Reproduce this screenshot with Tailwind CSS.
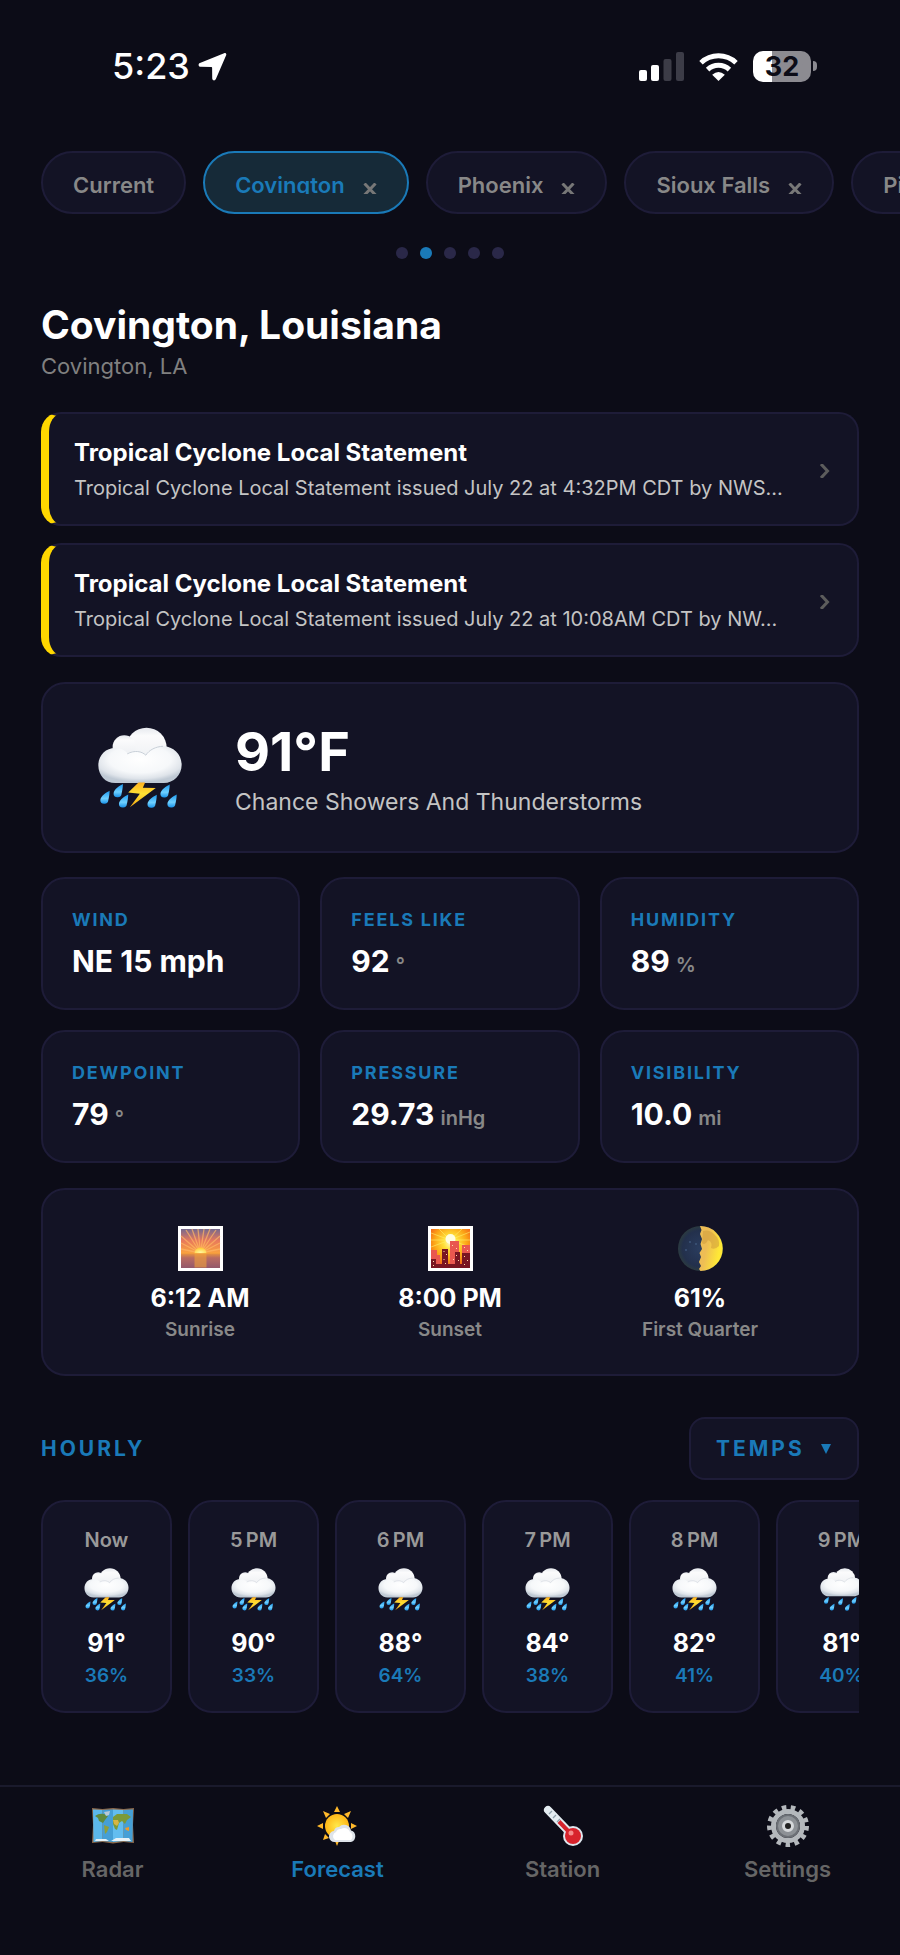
<!DOCTYPE html>
<html lang="en">
<head>
    <meta charset="UTF-8">
    <meta name="viewport" content="width=device-width, initial-scale=1.0">
    <title>Weather - Covington, Louisiana</title>
    <script src="https://cdn.jsdelivr.net/npm/@tailwindcss/browser@4"></script>
</head>
<body class="bg-[#0c0c17] font-['Inter',sans-serif] text-white">
    <!-- Shared weather icons -->
    <svg class="absolute h-0 w-0" aria-hidden="true">
        <defs>
            <linearGradient id="cloud-back" x1="0" y1="0" x2="0" y2="1">
                <stop offset="0" stop-color="#e6e9ee"/>
                <stop offset="0.2" stop-color="#fbfbfc"/>
                <stop offset="1" stop-color="#e9ecf0"/>
            </linearGradient>
            <radialGradient id="cloud-front" cx="0.5" cy="0.35" r="0.62">
                <stop offset="0" stop-color="#ffffff"/>
                <stop offset="0.6" stop-color="#f6f8fa"/>
                <stop offset="0.85" stop-color="#dfe4ea"/>
                <stop offset="1" stop-color="#bfc9d4"/>
            </radialGradient>
            <linearGradient id="bolt-fill" x1="0" y1="0" x2="0" y2="1">
                <stop offset="0" stop-color="#ffb01f"/>
                <stop offset="0.45" stop-color="#ffe234"/>
                <stop offset="1" stop-color="#f5a50f"/>
            </linearGradient>
            <linearGradient id="drop-fill" x1="0" y1="0" x2="0" y2="1">
                <stop offset="0" stop-color="#1e9bf0"/>
                <stop offset="0.6" stop-color="#6fd0ff"/>
                <stop offset="1" stop-color="#1791e8"/>
            </linearGradient>
            <path id="drop" d="M29 0C20 4 1 17 1 28a12 11 0 0 0 24 1C27 21 29 9 29 0Z" fill="url(#drop-fill)"/>
            <g id="cloud">
                <circle cx="200" cy="112" r="61" fill="url(#cloud-back)"/>
                <circle cx="133" cy="109" r="35" fill="url(#cloud-back)"/>
                <path d="M106 218C76 218 55 194 55 164C55 134 77 112 106 112C122 112 132 117 142 127C164 118 186 122 198 134C210 116 230 107 250 107C282 107 306 132 306 163C306 194 282 218 252 218Z" fill="url(#cloud-front)"/>
                <path d="M142 130C164 118 186 122 198 134C208 118 228 108 250 107" fill="none" stroke="#c9d0d8" stroke-width="3"/>
            </g>
        </defs>
        <symbol id="icon-storm" viewBox="54 50 253 245">
            <use href="#cloud"/>
            <use href="#drop" x="60" y="241"/>
            <use href="#drop" x="100" y="221"/>
            <use href="#drop" x="116" y="252"/>
            <use href="#drop" x="202" y="253"/>
            <use href="#drop" x="241" y="222"/>
            <use href="#drop" x="262" y="252"/>
            <path d="M176 216L145 246L180 250L150 291L228 233L189 232L196 216Z" fill="url(#bolt-fill)"/>
        </symbol>
        <symbol id="icon-rain" viewBox="54 40 253 255">
            <g transform="translate(0 -10)"><use href="#cloud"/></g>
            <use href="#drop" x="76" y="212"/>
            <use href="#drop" x="110" y="252"/>
            <use href="#drop" x="160" y="220"/>
            <use href="#drop" x="200" y="254"/>
            <use href="#drop" x="240" y="212"/>
        </symbol>
        <symbol id="icon-close" viewBox="0 0 14 11">
            <path d="M1.500 0.500L12.500 12M12.500 0.500L1.500 12" stroke="currentColor" stroke-width="3" fill="none"/>
        </symbol>
    </svg>

    <div class="flex min-h-screen flex-col">
        <!-- Status bar -->
        <header class="flex h-[151px] items-start justify-between pt-12 pr-[83px] pl-28">
            <div class="flex h-9 items-center gap-2">
                <span class="text-[36px] leading-9 font-medium">5:23</span>
                <svg class="h-[29px] w-[29px]" viewBox="0 0 30 30" fill="#fff"><path d="M27 1.200C28.500 .5 29.800 1.800 29.100 3.400L18.500 28C17.500 30.200 14.700 29.600 14.700 27.200L14.600 16.200Q14.600 15.400 13.800 15.400L2.800 15.300C.4 15.300-.2 12.500 2 11.500Z"/></svg>
            </div>
            <div class="flex h-9 items-center gap-[15px]">
                <svg class="h-[29px] w-[45px]" viewBox="0 0 45 29">
                    <rect x="0" y="18" width="8" height="11" rx="2" fill="#fff"/>
                    <rect x="12" y="13" width="8" height="16" rx="2" fill="#fff"/>
                    <rect x="24.500" y="7" width="8" height="22" rx="2" fill="#3c3c47"/>
                    <rect x="37" y="0" width="8" height="29" rx="2" fill="#3c3c47"/>
                </svg>
                <svg class="h-[29px] w-[39px]" viewBox="0 0 39 29" fill="none" stroke="#fff" stroke-width="5">
                    <path d="M2 10.800A25.500 25.500 0 0 1 37 10.800"/>
                    <path d="M8.600 17.600A16 16 0 0 1 30.400 17.600"/>
                    <path d="M19.500 29L13.200 22.700Q19.500 17.300 25.800 22.700Z" fill="#fff" stroke="none"/>
                </svg>
                <div class="flex items-center gap-0.5">
                    <div class="flex h-[31px] w-[58px] items-center justify-center rounded-[10px] bg-linear-to-r from-white from-33% to-[#8c8b91] to-33% text-[27px] leading-[31px] font-bold text-[#0c0c17]">32</div>
                    <div class="h-[10px] w-1 rounded-r-full bg-[#8c8b91]"></div>
                </div>
            </div>
        </header>

        <!-- Saved locations -->
        <div class="flex gap-[17px] overflow-x-auto pl-[41px] [scrollbar-width:none]">
            <div class="flex h-[63px] shrink-0 items-center rounded-full border-2 border-[#1e1c38] bg-[#131325] px-[30px] text-[22px] font-semibold text-[#888]">
                <button class="h-[23px] leading-7">Current</button>
            </div>
            <div class="flex h-[63px] shrink-0 items-center gap-[18px] rounded-full border-2 border-[#1a7ab8] bg-[#162a38] px-[30px] text-[22px] font-semibold text-[#1a7ab8]">
                <button class="h-[23px] overflow-hidden leading-7">Covington</button>
                <button class="flex h-[23px] w-[14px] items-end text-[#777]" aria-label="Remove Covington"><svg class="h-[11px] w-[14px]"><use href="#icon-close"/></svg></button>
            </div>
            <div class="flex h-[63px] shrink-0 items-center gap-[18px] rounded-full border-2 border-[#1e1c38] bg-[#131325] px-[30px] text-[22px] font-semibold text-[#888]">
                <button class="h-[23px] leading-7">Phoenix</button>
                <button class="flex h-[23px] w-[14px] items-end text-[#777]" aria-label="Remove Phoenix"><svg class="h-[11px] w-[14px]"><use href="#icon-close"/></svg></button>
            </div>
            <div class="flex h-[63px] shrink-0 items-center gap-[18px] rounded-full border-2 border-[#1e1c38] bg-[#131325] px-[30px] text-[22px] font-semibold text-[#888]">
                <button class="h-[23px] leading-7">Sioux Falls</button>
                <button class="flex h-[23px] w-[14px] items-end text-[#777]" aria-label="Remove Sioux Falls"><svg class="h-[11px] w-[14px]"><use href="#icon-close"/></svg></button>
            </div>
            <div class="flex h-[63px] shrink-0 items-center gap-[18px] rounded-full border-2 border-[#1e1c38] bg-[#131325] px-[30px] text-[22px] font-semibold text-[#888]">
                <button class="h-[23px] leading-7">Pittsburgh</button>
                <button class="flex h-[23px] w-[14px] items-end text-[#777]" aria-label="Remove Pittsburgh"><svg class="h-[11px] w-[14px]"><use href="#icon-close"/></svg></button>
            </div>
        </div>

        <!-- Page dots -->
        <div class="mt-[33px] flex justify-center gap-3">
            <span class="h-3 w-3 rounded-full bg-[#2a2848]"></span>
            <span class="h-3 w-3 rounded-full bg-[#1a7ab8]"></span>
            <span class="h-3 w-3 rounded-full bg-[#2a2848]"></span>
            <span class="h-3 w-3 rounded-full bg-[#2a2848]"></span>
            <span class="h-3 w-3 rounded-full bg-[#2a2848]"></span>
        </div>

        <main class="flex flex-col px-[41px] pt-[42px]">
            <h1 class="text-[39px] leading-[48px] font-bold">Covington, Louisiana</h1>
            <p class="mt-[3px] text-[22px] leading-7 text-[#808080]">Covington, LA</p>

            <!-- Alerts -->
            <div class="mt-8 flex flex-col gap-[17px]">
                <button class="flex h-[114px] items-center gap-4 rounded-[20px] border-2 border-l-8 border-[#1e1c38] border-l-[#ffd700] bg-[#131325] pt-[3px] pr-[27px] pl-[25px] text-left">
                    <span class="flex min-w-0 flex-1 flex-col gap-[7px]">
                        <span class="text-[24px] leading-7 font-bold">Tropical Cyclone Local Statement</span>
                        <span class="truncate text-[20px] leading-7 text-[#c4c4c4]">Tropical Cyclone Local Statement issued July 22 at 4:32PM CDT by NWS...</span>
                    </span>
                    <svg class="h-[14px] w-[10px]" viewBox="0 0 10 14" fill="none" stroke="#5c5c5c" stroke-width="3"><path d="M1 0L7.500 7L1 14"/></svg>
                </button>
                <button class="flex h-[114px] items-center gap-4 rounded-[20px] border-2 border-l-8 border-[#1e1c38] border-l-[#ffd700] bg-[#131325] pt-[3px] pr-[27px] pl-[25px] text-left">
                    <span class="flex min-w-0 flex-1 flex-col gap-[7px]">
                        <span class="text-[24px] leading-7 font-bold">Tropical Cyclone Local Statement</span>
                        <span class="truncate text-[20px] leading-7 text-[#c4c4c4]">Tropical Cyclone Local Statement issued July 22 at 10:08AM CDT by NW...</span>
                    </span>
                    <svg class="h-[14px] w-[10px]" viewBox="0 0 10 14" fill="none" stroke="#5c5c5c" stroke-width="3"><path d="M1 0L7.500 7L1 14"/></svg>
                </button>
            </div>

            <!-- Current conditions -->
            <section class="mt-[25px] flex h-[171px] items-center gap-[53px] rounded-3xl border-2 border-[#1e1c38] bg-[#131325] px-[55px]">
                <svg class="h-[82px] w-[84px]"><use href="#icon-storm"/></svg>
                <div class="pt-1">
                    <p class="text-[54px] leading-[60px] font-bold">91°F</p>
                    <p class="mt-1 text-[23px] leading-8 text-[#c4c4c4]">Chance Showers And Thunderstorms</p>
                </div>
            </section>

            <!-- Metrics -->
            <dl class="mt-6 grid grid-cols-3 gap-5">
                <div class="h-[133px] rounded-3xl border-2 border-[#1e1c38] bg-[#131325] px-[29px] pt-[29px]">
                    <dt class="text-[18px] leading-6 font-bold tracking-widest text-[#1a7ab8]">WIND</dt>
                    <dd class="mt-[11px] text-[30px] leading-9 font-bold">NE 15 mph</dd>
                </div>
                <div class="h-[133px] rounded-3xl border-2 border-[#1e1c38] bg-[#131325] px-[29px] pt-[29px]">
                    <dt class="text-[18px] leading-6 font-bold tracking-widest text-[#1a7ab8]">FEELS LIKE</dt>
                    <dd class="mt-[11px] text-[30px] leading-9 font-bold">92<span class="ml-1.5 text-[20px] font-semibold text-[#888]">°</span></dd>
                </div>
                <div class="h-[133px] rounded-3xl border-2 border-[#1e1c38] bg-[#131325] px-[29px] pt-[29px]">
                    <dt class="text-[18px] leading-6 font-bold tracking-widest text-[#1a7ab8]">HUMIDITY</dt>
                    <dd class="mt-[11px] text-[30px] leading-9 font-bold">89<span class="ml-1.5 text-[20px] font-semibold text-[#888]">%</span></dd>
                </div>
                <div class="h-[133px] rounded-3xl border-2 border-[#1e1c38] bg-[#131325] px-[29px] pt-[29px]">
                    <dt class="text-[18px] leading-6 font-bold tracking-widest text-[#1a7ab8]">DEWPOINT</dt>
                    <dd class="mt-[11px] text-[30px] leading-9 font-bold">79<span class="ml-1.5 text-[20px] font-semibold text-[#888]">°</span></dd>
                </div>
                <div class="h-[133px] rounded-3xl border-2 border-[#1e1c38] bg-[#131325] px-[29px] pt-[29px]">
                    <dt class="text-[18px] leading-6 font-bold tracking-widest text-[#1a7ab8]">PRESSURE</dt>
                    <dd class="mt-[11px] text-[30px] leading-9 font-bold">29.73<span class="ml-1.5 text-[20px] font-semibold text-[#888]">inHg</span></dd>
                </div>
                <div class="h-[133px] rounded-3xl border-2 border-[#1e1c38] bg-[#131325] px-[29px] pt-[29px]">
                    <dt class="text-[18px] leading-6 font-bold tracking-widest text-[#1a7ab8]">VISIBILITY</dt>
                    <dd class="mt-[11px] text-[30px] leading-9 font-bold">10.0<span class="ml-1.5 text-[20px] font-semibold text-[#888]">mi</span></dd>
                </div>
            </dl>

            <!-- Sun and moon -->
            <section class="mt-[25px] grid h-[188px] grid-cols-3 rounded-3xl border-2 border-[#1e1c38] bg-[#131325] px-8 pt-9 text-center">
                <div class="flex flex-col items-center">
                    <svg class="h-[45px] w-[45px]" viewBox="0 0 45 45">
                        <defs>
                            <linearGradient id="dawn" x1="0" y1="0" x2="0" y2="1">
                                <stop offset="0" stop-color="#74688e"/>
                                <stop offset="0.3" stop-color="#e8795c"/>
                                <stop offset="0.65" stop-color="#fba63c"/>
                                <stop offset="1" stop-color="#8b5566"/>
                            </linearGradient>
                            <linearGradient id="dawn-sea" x1="0" y1="0" x2="0" y2="1">
                                <stop offset="0" stop-color="#e8943f"/>
                                <stop offset="0.3" stop-color="#b96c62"/>
                                <stop offset="1" stop-color="#93586b"/>
                            </linearGradient>
                            <radialGradient id="dawn-sun" cx="0.5" cy="0.8" r="0.8"><stop offset="0" stop-color="#fff8a0"/><stop offset="1" stop-color="#ffc629"/></radialGradient>
                        </defs>
                        <rect width="45" height="45" fill="#fff"/>
                        <rect x="3" y="3" width="39" height="39" fill="url(#dawn)"/>
                        <g stroke="#ffb765" stroke-width="1.300" opacity="0.700">
                            <path d="M22.500 27L3 23M22.500 27L3 17M22.500 27L3 10M22.500 27L8 4M22.500 27L14 3M22.500 27L20 3M22.500 27L26 3M22.500 27L32 3M22.500 27L38 4M22.500 27L42 10M22.500 27L42 17M22.500 27L42 23"/>
                        </g>
                        <path d="M16.500 27.500a6 6 0 0 1 12 0Z" fill="url(#dawn-sun)"/>
                        <rect x="3" y="27.500" width="39" height="14.500" fill="url(#dawn-sea)"/>
                        <rect x="16.500" y="27.500" width="12" height="14" fill="#f2a13a" opacity="0.600"/>
                    </svg>
                    <p class="mt-[11px] text-[25px] leading-8 font-bold">6:12 AM</p>
                    <p class="mt-1 text-[19px] leading-6 font-semibold text-[#888]">Sunrise</p>
                </div>
                <div class="flex flex-col items-center">
                    <svg class="h-[45px] w-[45px]" viewBox="0 0 45 45">
                        <defs>
                            <radialGradient id="dusk" cx="0.5" cy="0.35" r="0.7">
                                <stop offset="0" stop-color="#fffbd0"/>
                                <stop offset="0.25" stop-color="#ffe23a"/>
                                <stop offset="0.6" stop-color="#fca516"/>
                                <stop offset="1" stop-color="#f04a1a"/>
                            </radialGradient>
                        </defs>
                        <rect width="45" height="45" fill="#fff"/>
                        <rect x="3" y="3" width="39" height="39" fill="url(#dusk)"/>
                        <g stroke="#fff06a" stroke-width="1" opacity="0.600"><path d="M22 14L3 7M22 14L3 14M22 14L3 21M22 14L11 3M22 14L34 3M22 14L42 6M22 14L42 14M22 14L42 21"/></g>
                        <circle cx="22.500" cy="13" r="5" fill="#fffde0"/>
                        <path d="M3 24h6v5h3v13H3ZM22 15h9v27h-9ZM34 19h8v23h-8Z" fill="#e9574f"/>
                        <path d="M14 23h6v19h-6ZM3 33h5v9H3ZM27 26h5v16h-5ZM34 27h8v15h-8ZM8 38h30v4H8Z" fill="#7a1522"/>
                        <g fill="#ffd9a8"><path d="M15.500 25h1v1h-1ZM18 28h1v1h-1ZM15.500 33h1v1h-1ZM24 19h1v1h-1ZM28 22h1v1h-1ZM36 21h1v1h-1ZM39 24h1v1h-1ZM36 30h1v1h-1ZM39 34h1v1h-1ZM28 29h1v1h-1ZM25 33h1v1h-1ZM5 35h1v1h-1ZM5 39h1v1h-1ZM30 34h1v1h-1ZM17 37h1v1h-1ZM36 38h1v1h-1Z"/></g>
                    </svg>
                    <p class="mt-[11px] text-[25px] leading-8 font-bold">8:00 PM</p>
                    <p class="mt-1 text-[19px] leading-6 font-semibold text-[#888]">Sunset</p>
                </div>
                <div class="flex flex-col items-center">
                    <svg class="h-[45px] w-[45px]" viewBox="0 0 45 45">
                        <defs>
                            <linearGradient id="moon" x1="0.5" y1="0" x2="1" y2="0.200"><stop offset="0" stop-color="#eebd55"/><stop offset="1" stop-color="#ffe836"/></linearGradient>
                            <radialGradient id="moon-dark"><stop offset="0" stop-color="#2a3d5f"/><stop offset="0.800" stop-color="#23304c"/><stop offset="1" stop-color="#2b3a40"/></radialGradient>
                        </defs>
                        <circle cx="22.500" cy="22.500" r="22.500" fill="url(#moon-dark)"/>
                        <path d="M22 0A22.500 22.500 0 0 1 22.500 45L21 43L23 40L21 36L23 31L21.500 27L24 23L22.500 18L24 13L22 8L23.500 4Z" fill="url(#moon)"/>
                        <path d="M25 5Q31 3 36 8Q42 13 41 20Q37 24 33 22Q35 16 30 14Q27 20 24 17Z" fill="#d09c3c" opacity="0.550"/>
                        <g fill="#3d5478"><circle cx="12" cy="16" r="1"/><circle cx="18" cy="18" r="1"/><circle cx="8" cy="24" r="1"/></g>
                    </svg>
                    <p class="mt-[11px] text-[25px] leading-8 font-bold">61%</p>
                    <p class="mt-1 text-[19px] leading-6 font-semibold text-[#888]">First Quarter</p>
                </div>
            </section>

            <!-- Hourly forecast -->
            <div class="mt-[41px] flex items-center justify-between text-[#1a7ab8]">
                <h2 class="text-[21px] font-bold tracking-[3px]">HOURLY</h2>
                <div class="relative">
                    <select aria-label="Hourly data" class="block h-[63px] w-[170px] appearance-none rounded-2xl border-2 border-[#1e1c38] bg-[#131325] pl-[25px] text-[21px] font-bold tracking-[3px]">
                        <option>TEMPS</option>
                        <option>WIND</option>
                        <option>RAIN</option>
                    </select>
                    <svg class="pointer-events-none absolute top-[27px] right-7 h-[10px] w-[10px]" viewBox="0 0 10 10" fill="currentColor"><path d="M0 0H10L5 10Z"/></svg>
                </div>
            </div>

            <div id="hours" class="mt-5 flex gap-4 overflow-x-auto [scrollbar-width:none]"></div>
        </main>

        <!-- Tab bar -->
        <nav class="mt-auto grid h-[170px] grid-cols-4 border-t-2 border-[#1a1a2c] pt-[18px] text-[22px] leading-7 font-semibold text-[#666]">
            <a href="#radar" class="flex flex-col items-center gap-2">
                <svg class="h-[42px] w-[42px]" viewBox="0 0 42 42">
                    <path d="M0 3L10.500 4L21 3L31.500 4L42 3L41 20L42 38L31.500 37L21 38.500L10.500 37L0 38L1 20Z" fill="#8d6a4c"/>
                    <path d="M1 4.500L10.500 5L10.500 36L1.500 37Z" fill="#5bb8ec"/>
                    <path d="M10.500 5L21 4.500V37L10.500 36Z" fill="#459fd6"/>
                    <path d="M21 4.500L31.500 5V36L21 37Z" fill="#62bdf0"/>
                    <path d="M31.500 5L41 4.500L40.500 37L31.500 36Z" fill="#459fd6"/>
                    <path d="M3 11Q7 8 12 9L16 11L13 15L11 18L7 16L6 13Z" fill="#5f8a3d"/>
                    <path d="M12 7L18 6L17 10L14 11Z" fill="#b9c9d4"/>
                    <path d="M12 20L17 22L15 27L13 29Z" fill="#8fa03a"/>
                    <path d="M21 12L25 9L35 9L39 12L35 15L33 19L30 16L27 18L25 25L23 24L21 19Z" fill="#7b9a3a"/>
                    <path d="M21 15L26 15L27 18L25 21L22 19Z" fill="#d8b544"/>
                    <path d="M33 23L37 22L37 26L34 25Z" fill="#ee9a2c"/>
                    <path d="M3 36L4 34L14 34L17 36ZM19 36L24 33L37 33L39 36Z" fill="#e4f0f6"/>
                </svg>
                Radar
            </a>
            <a href="#forecast" class="flex flex-col items-center gap-2 text-[#1a7ab8]" aria-current="page">
                <svg class="h-[42px] w-[42px]" viewBox="0 0 42 42">
                    <defs><radialGradient id="sun-fill"><stop offset="0" stop-color="#ffe94a"/><stop offset="1" stop-color="#ffb716"/></radialGradient></defs>
                    <g fill="#ffb92b"><path d="M20 1L23 7H17ZM6 6L13 9L9 13ZM34 6L31 13L27 9ZM0 21L6 18V24ZM40 21L34 18V24ZM6 35L8 29L12 33ZM20 41L18 36H22Z"/></g>
                    <circle cx="20" cy="21" r="12" fill="url(#sun-fill)"/>
                    <path d="M18 37a5.500 5.500 0 0 1-1-11a5 5 0 0 1 5-4a7 7 0 0 1 12 3.500a6 6 0 0 1 0 11.500Z" fill="#dfe4ea"/>
                    <path d="M18 35a4.500 4.500 0 0 1 1-8a5 5 0 0 1 5-3a6 6 0 0 1 9 3a5 5 0 0 1 1 8Z" fill="#fff"/>
                </svg>
                Forecast
            </a>
            <a href="#station" class="flex flex-col items-center gap-2">
                <svg class="h-[42px] w-[42px]" viewBox="0 0 42 42">
                    <path d="M6 5L31 31" stroke="#e4ecf1" stroke-width="8" stroke-linecap="round"/>
                    <circle cx="31" cy="31" r="10" fill="#dfe7ee"/>
                    <path d="M17 16.500L30 30" stroke="#d5222b" stroke-width="4"/>
                    <circle cx="31" cy="31" r="8" fill="#d8232c"/>
                    <circle cx="29" cy="28" r="2.500" fill="#f58a8a"/>
                    <path d="M10 6L7 9M14 10L11 13M18 14L15 17" stroke="#8fa0ab" stroke-width="1.300"/>
                </svg>
                Station
            </a>
            <a href="#settings" class="flex flex-col items-center gap-2">
                <svg class="h-[42px] w-[42px]" viewBox="0 0 42 42" fill="none">
                    <circle cx="21" cy="21" r="18.500" stroke="#b4b8bc" stroke-width="5" stroke-dasharray="4.470 4.470"/>
                    <circle cx="21" cy="21" r="14.500" stroke="#b4b8bc" stroke-width="5"/>
                    <circle cx="21" cy="21" r="11" fill="#8d9196" stroke="#6c7076" stroke-width="2"/>
                    <circle cx="21" cy="21" r="4.500" stroke="#d5d8db" stroke-width="3" fill="#222"/>
                </svg>
                Settings
            </a>
        </nav>
    </div>

    <script>
        const hours = [
            { time: 'Now', icon: 'storm', temp: 91, rain: 36 },
            { time: '5\u202fPM', icon: 'storm', temp: 90, rain: 33 },
            { time: '6\u202fPM', icon: 'storm', temp: 88, rain: 64 },
            { time: '7\u202fPM', icon: 'storm', temp: 84, rain: 38 },
            { time: '8\u202fPM', icon: 'storm', temp: 82, rain: 41 },
            { time: '9\u202fPM', icon: 'rain', temp: 81, rain: 40 }
        ];

        document.getElementById('hours').innerHTML = hours.map(hour => `
            <div class="flex h-[213px] w-[131px] shrink-0 flex-col items-center rounded-3xl border-2 border-[#1e1c38] bg-[#131325] pt-6">
                <p class="text-[20px] leading-7 font-semibold text-[#999]">${hour.time}</p>
                <svg class="mt-[14px] h-[43px] w-[45px]"><use href="#icon-${hour.icon}"/></svg>
                <p class="mt-4 text-[25px] leading-8 font-bold">${hour.temp}°</p>
                <p class="mt-[5px] text-[19px] leading-6 font-semibold text-[#1a7ab8]">${hour.rain}%</p>
            </div>
        `).join('');
    </script>
</body>
</html>
